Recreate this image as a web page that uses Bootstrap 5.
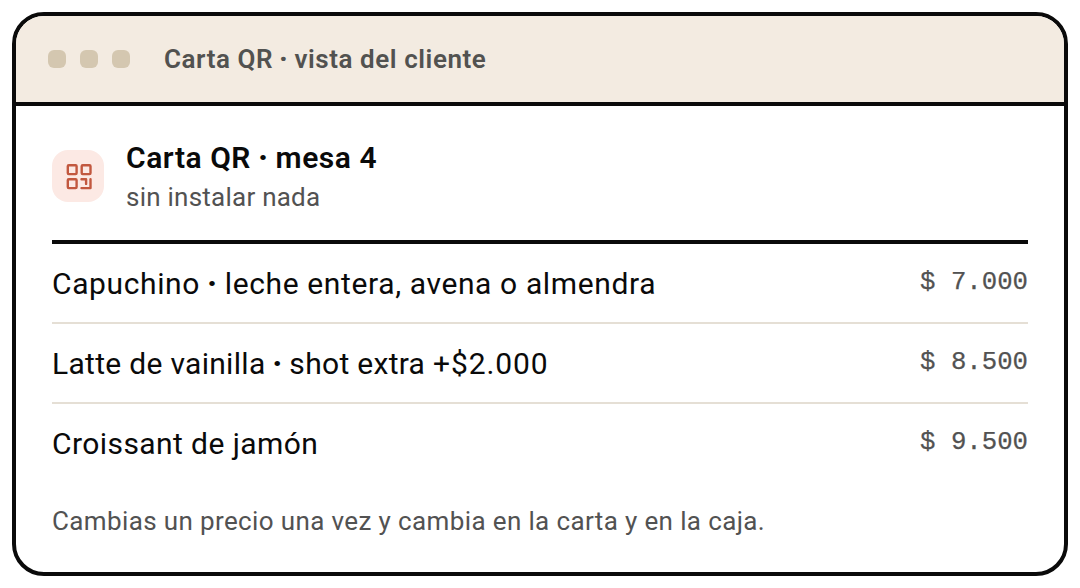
<!DOCTYPE html>
<html lang="es">
<head>
<meta charset="utf-8">
<meta name="viewport" content="width=device-width, initial-scale=1">
<title>Carta QR</title>
<link href="https://cdn.jsdelivr.net/npm/bootstrap@5.3.0/dist/css/bootstrap.min.css" rel="stylesheet">
<style>
body { font-family: Roboto, "Liberation Sans", sans-serif; color: #0a0a0a; background: #fff; padding: 12px; height: 588px; overflow: hidden; }
.window { height: 564px; border: 4px solid #0a0a0a; border-radius: 32px; background: #fff; overflow: hidden; }
.window-bar { height: 90px; background: #f3ebe1; border-bottom: 4px solid #0a0a0a; padding: 0 32px; }
.dots { gap: 14px; margin-right: 34px; }
.dot { width: 18px; height: 18px; border-radius: 6px; background: #d4c7b0; }
.bar-title { font-size: 26px; font-weight: 600; line-height: 36px; color: #525250; letter-spacing: .56px; }
.window-body { padding: 32px 36px 0; }
.menu-head { height: 106px; border-bottom: 4px solid #0a0a0a; }
.tile { width: 52px; height: 52px; border-radius: 16px; background: #fce9e4; margin: 12px 22px 0 0; }
.menu-title { font-size: 30px; font-weight: 600; line-height: 40px; letter-spacing: .54px; }
.soft { font-size: 26px; line-height: 38px; color: #525252; letter-spacing: .24px; }
.item { height: 80px; border-bottom: 2px solid #e5dfd5; padding-top: 1px; font-size: 30px; line-height: 40px; letter-spacing: .42px; }
.item:last-child { border-bottom-color: transparent; }
.item-long { letter-spacing: .62px; }
.item-extra { letter-spacing: .3px; }
.extra { letter-spacing: .9px; }
.note { margin-top: 18px; letter-spacing: .37px; }
.mid { font-weight: 900; margin: 0 -.8px; }
.price { font-family: "Liberation Mono", monospace; font-size: 25.7px; letter-spacing: 0; color: #525252; margin-top: -1px; -webkit-text-stroke: .25px #525252; }
</style>
</head>
<body>
<main class="window">
  <header class="window-bar d-flex align-items-center">
    <div class="dots d-flex"><span class="dot"></span><span class="dot"></span><span class="dot"></span></div>
    <div class="bar-title text-nowrap">Carta QR <span class="mid">·</span> vista del cliente</div>
  </header>
  <section class="window-body">
    <div class="menu-head d-flex align-items-start">
      <div class="tile d-flex flex-shrink-0">
        <svg width="52" height="52" viewBox="0 0 52 52" fill="none" stroke="#c2583f" stroke-width="2.4" stroke-linecap="round" stroke-linejoin="round">
          <rect x="15.8" y="15.3" width="8.8" height="8.8" rx="1"/>
          <rect x="29.7" y="15.3" width="8.8" height="8.8" rx="1"/>
          <rect x="15.8" y="29.3" width="8.8" height="8.8" rx="1"/>
          <path d="M29.5 29.3h4.6v4.6M38.5 29.3v8.8h-9"/>
        </svg>
      </div>
      <div class="text-nowrap">
        <div class="menu-title">Carta QR <span class="mid">·</span> mesa 4</div>
        <div class="soft">sin instalar nada</div>
      </div>
    </div>
    <div class="items">
      <div class="item item-long d-flex align-items-center justify-content-between"><span>Capuchino <span class="mid">·</span> leche entera, avena o almendra</span><span class="price">$ 7.000</span></div>
      <div class="item item-extra d-flex align-items-center justify-content-between"><span>Latte de vainilla <span class="mid">·</span> shot extra <span class="extra">+$2.000</span></span><span class="price">$ 8.500</span></div>
      <div class="item d-flex align-items-center justify-content-between"><span>Croissant de jamón</span><span class="price">$ 9.500</span></div>
    </div>
    <div class="soft note text-nowrap">Cambias un precio una vez y cambia en la carta y en la caja.</div>
  </section>
</main>
<script src="https://cdn.jsdelivr.net/npm/bootstrap@5.3.0/dist/js/bootstrap.bundle.min.js"></script>
</body>
</html>
